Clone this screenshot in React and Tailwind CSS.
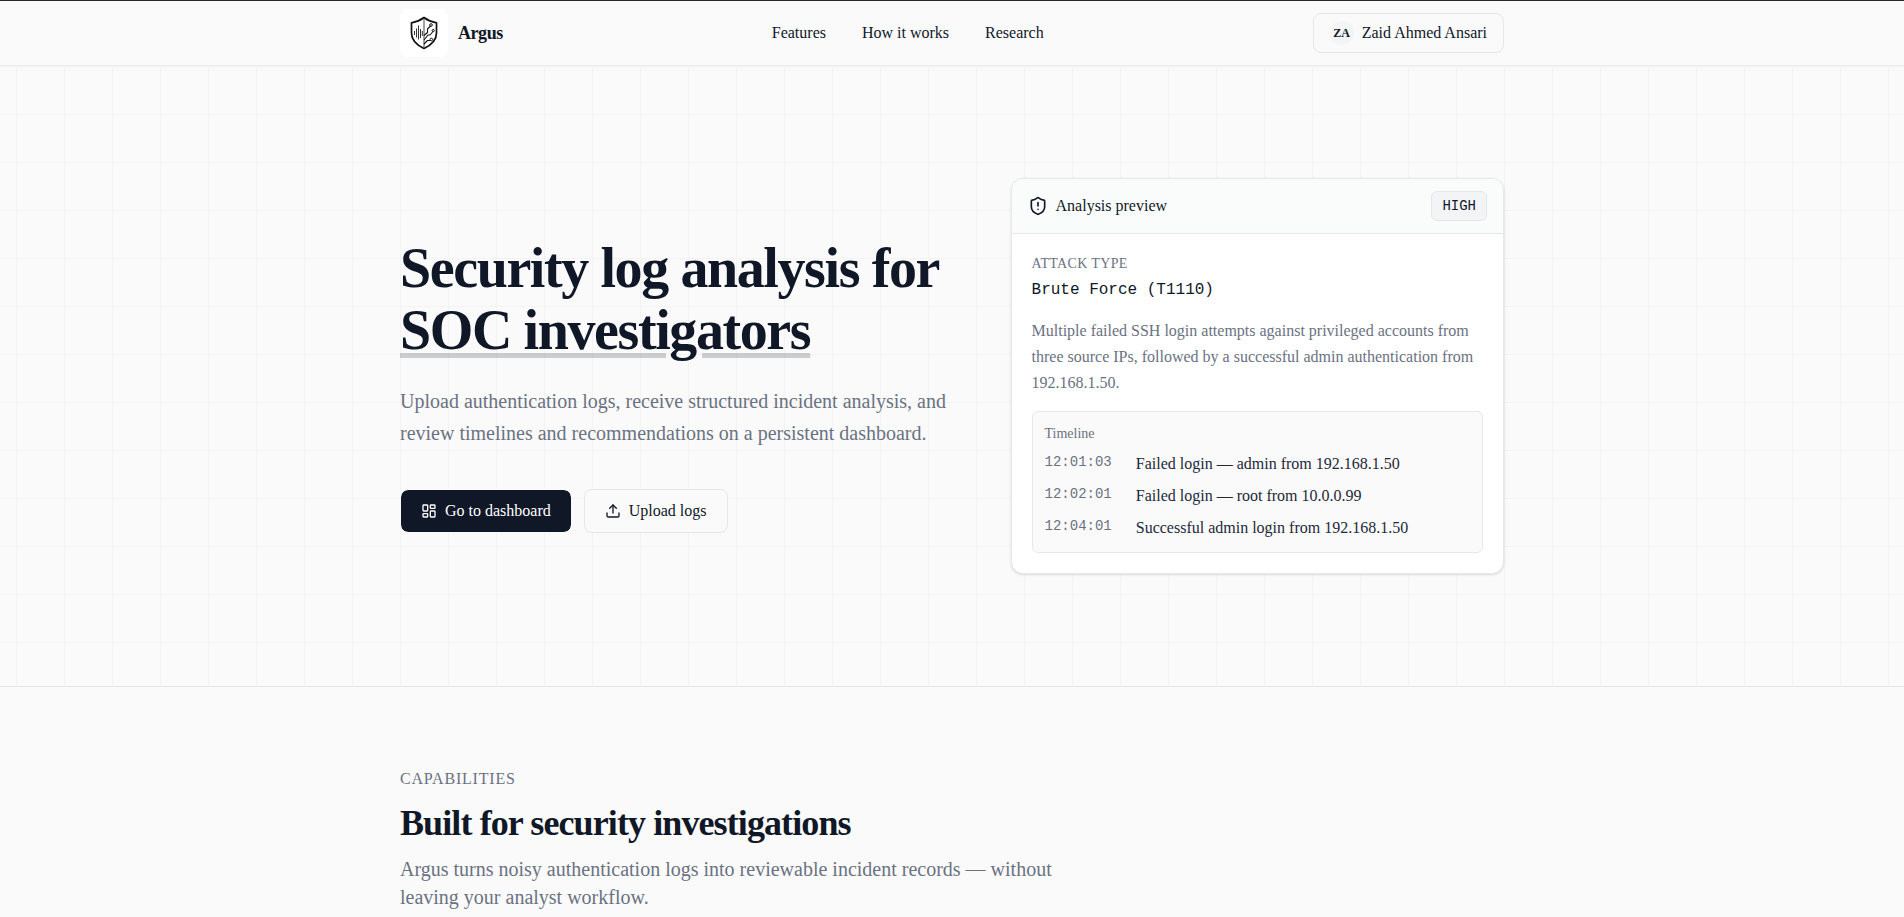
import React from 'react';
import { LayoutDashboard, ShieldAlert, Upload } from 'lucide-react';

const navLinks = [
  { label: 'Features', href: '#features' },
  { label: 'How it works', href: '#how-it-works' },
  { label: 'Research', href: '#research' },
];

const timeline = [
  { time: '12:01:03', event: 'Failed login — admin from 192.168.1.50' },
  { time: '12:02:01', event: 'Failed login — root from 10.0.0.99' },
  { time: '12:04:01', event: 'Successful admin login from 192.168.1.50' },
];

function Logo() {
  return (
    <span className="flex size-12 items-center justify-center rounded-lg bg-white">
      <svg className="h-[34px] w-7" viewBox="0 0 28 34" fill="none" stroke="#111" strokeLinejoin="round">
        <path d="M14 1.5C10.500 4.200 6 6 1.500 6.800V17c0 7 5 12 12.500 15.500C21.500 29 26.500 24 26.500 17V6.800C22 6 17.500 4.200 14 1.500Z" strokeWidth="1.700" />
        <path d="M14 3v29" strokeWidth="1" stroke="#444" />
        <path d="M4.500 15v4M6.500 12.500v9M8.500 9.500v14M10.500 13v9M12.300 15v5" strokeWidth="1" stroke="#333" />
        <path d="M14 19.500l3.500-3v-3.500l3-3M14 24l4-5h2l3-3.500M14 28l3.500-3.500h3" strokeWidth="1.100" />
        <circle cx="21" cy="9" r="1.300" strokeWidth="1" />
        <circle cx="23.200" cy="14.500" r="1.100" strokeWidth="1" />
        <circle cx="21.300" cy="23.500" r="1.300" strokeWidth="1" />
      </svg>
    </span>
  );
}

function Header() {
  return (
    <header className="border-t border-b border-t-[#27272f] border-b-[#ededef] bg-[#fafafa]">
      <div className="mx-auto flex h-16 max-w-6xl items-center justify-between px-6">
        <a href="#top" className="flex items-center gap-2.5 text-lg font-bold tracking-tight">
          <Logo />
          Argus
        </a>
        <nav className="flex items-center gap-9">
          {navLinks.map(link => (
            <a key={link.href} href={link.href}>{link.label}</a>
          ))}
        </nav>
        <button className="flex h-10 items-center gap-2 rounded-lg border border-gray-200 px-4">
          <span className="flex size-6 items-center justify-center rounded-full bg-gray-100 text-xs font-bold">ZA</span>
          Zaid Ahmed Ansari
        </button>
      </div>
    </header>
  );
}

function AnalysisPreview() {
  return (
    <div className="overflow-hidden rounded-xl border border-gray-200 bg-white shadow-sm">
      <div className="flex items-center justify-between border-b border-gray-200 bg-[#fafcfc] px-4 py-3">
        <div className="flex items-center gap-2">
          <ShieldAlert className="size-5" />
          <span>Analysis preview</span>
        </div>
        <span className="rounded-md border border-gray-200 bg-gray-100 px-2.5 py-1 font-['Liberation_Mono',monospace] text-sm font-medium">HIGH</span>
      </div>

      <div className="p-5">
        <p className="text-sm tracking-wide text-gray-500">ATTACK TYPE</p>
        <p className="mt-1 font-['Liberation_Mono',monospace] text-base">Brute Force (T1110)</p>
        <p className="mt-4 leading-[26px] text-gray-500">
          Multiple failed SSH login attempts against privileged accounts from three source IPs, followed by a
          successful admin authentication from 192.168.1.50.
        </p>

        <div className="mt-[15px] rounded-md border border-gray-200 bg-[#fafafa] p-3">
          <p className="text-sm text-gray-500">Timeline</p>
          <ul className="mt-2 space-y-2">
            {timeline.map(item => (
              <li key={item.time} className="flex gap-6">
                <span className="font-['Liberation_Mono',monospace] text-sm text-gray-500">{item.time}</span>
                <span className="text-gray-800">{item.event}</span>
              </li>
            ))}
          </ul>
        </div>
      </div>
    </div>
  );
}

function Hero() {
  return (
    <section className="border-b border-gray-200 bg-[linear-gradient(to_right,#f3f3f4_1px,transparent_1px),linear-gradient(to_bottom,#f3f3f4_1px,transparent_1px)] bg-[size:48px_48px] bg-top">
      <div className="mx-auto grid max-w-6xl items-center gap-12 px-6 py-28 lg:grid-cols-[1.14fr_1fr]">
        <div className="pt-[18px]">
          <h1 className="text-[56px] leading-[62px] font-bold tracking-tight">
            Security log analysis for{' '}
            <span className="underline decoration-gray-900/20 decoration-[5px] underline-offset-4">SOC investigators</span>
          </h1>
          <p className="mt-6 text-xl leading-8 text-gray-500">
            Upload authentication logs, receive structured incident analysis, and review timelines and
            recommendations on a persistent dashboard.
          </p>
          <div className="mt-10 flex gap-3">
            <button className="flex h-11 items-center gap-2 rounded-lg border border-[#fafafa] bg-gray-900 bg-clip-padding px-5 text-white">
              <LayoutDashboard className="size-4" />
              Go to dashboard
            </button>
            <button className="flex h-11 items-center gap-2 rounded-lg border border-gray-200 bg-[#fafafa] px-5">
              <Upload className="size-4" />
              Upload logs
            </button>
          </div>
        </div>
        <AnalysisPreview />
      </div>
    </section>
  );
}

function Capabilities() {
  return (
    <section id="features" className="mx-auto max-w-6xl px-6 pt-20">
      <p className="text-base tracking-wider text-gray-500">CAPABILITIES</p>
      <h2 className="mt-3 text-4xl font-bold tracking-tight">Built for security investigations</h2>
      <p className="mt-3 max-w-2xl text-xl leading-7 text-gray-500">
        Argus turns noisy authentication logs into reviewable incident records — without leaving your analyst workflow.
      </p>
    </section>
  );
}

export default function App() {
  return (
    <div id="top" className="h-screen overflow-hidden bg-[#fafafa] font-['Liberation_Serif',serif] text-base text-gray-900">
      <Header />
      <main>
        <Hero />
        <Capabilities />
      </main>
    </div>
  );
}
